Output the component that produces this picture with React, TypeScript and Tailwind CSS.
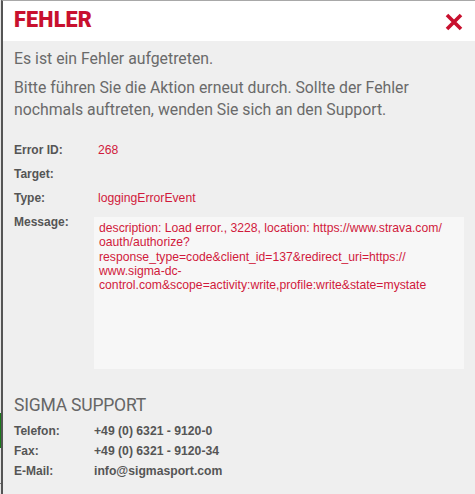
import React from 'react';

const RED = 'text-[#c8102e]';

const details: { label: string; value: string }[] = [
  { label: 'Error ID:', value: '268' },
  { label: 'Target:', value: '' },
  { label: 'Type:', value: 'loggingErrorEvent' },
];

// lines as the browser wrapped them in the box
const messageLines = [
  'description: Load error., 3228, location: https://www.strava.com/',
  'oauth/authorize?',
  'response_type=code&client_id=137&redirect_uri=https://',
  'www.sigma-dc-',
  'control.com&scope=activity:write,profile:write&state=mystate',
];

const support = [
  { label: 'Telefon:', value: '+49 (0) 6321 - 9120-0' },
  { label: 'Fax:', value: '+49 (0) 6321 - 9120-34' },
  { label: 'E-Mail:', value: 'info@sigmasport.com' },
];

const CloseIcon = () => (
  <svg width="18" height="18" viewBox="0 0 18 18" className="block">
    <path d="M2 2 L16 16 M16 2 L2 16" stroke="#c8102e" strokeWidth="3.6" fill="none" />
  </svg>
);

const App: React.FC = () => {
  return (
    <div className="flex w-[475px] h-[494px] overflow-hidden bg-[#f0f0f0] font-['Liberation_Sans',Arial,sans-serif]">
      {/* page behind the dialog peeks through on the left */}
      <div className="flex flex-col w-px shrink-0">
        <div className="h-[413px] bg-[#e6e6e6]" />
        <div className="h-[35px] bg-[#1a7a1a]" />
        <div className="h-[35px] bg-[#e6e6e6]" />
        <div className="h-px bg-[#777]" />
        <div className="flex-1 bg-[#e6e6e6]" />
      </div>

      <div className="flex-1 flex flex-col border-l-2 border-t border-l-[#555] border-t-[#a8a8a8] bg-[#efefef]">
        {/* header */}
        <div className="h-10 shrink-0 bg-white flex items-center justify-between pl-[11px] pr-[12px]">
          <h1 className={`${RED} font-['Roboto',sans-serif] font-black text-[21.6px] leading-none tracking-[0.2px] mt-[-2px]`}>
            FEHLER
          </h1>
          <button className="mt-[1px]">
            <CloseIcon />
          </button>
        </div>

        {/* body */}
        <div className="pl-[11px] pr-[10px] pt-[7px]">
          <p className="font-['Roboto',sans-serif] text-[15.8px] leading-[22px] text-[#6a6a6a]">
            Es ist ein Fehler aufgetreten.
          </p>
          <p className="mt-[7px] font-['Roboto',sans-serif] text-[15.8px] leading-[22px] text-[#6a6a6a]">
            Bitte führen Sie die Aktion erneut durch. Sollte der Fehler nochmals auftreten, wenden Sie sich an den Support.
          </p>

          <div className="mt-[17px] text-[12px]">
            {details.map(d => (
              <div key={d.label} className="flex h-6 leading-6">
                <span className="w-20 font-bold text-[#555]">{d.label}</span>
                <span className="pl-1 text-[12.2px] text-[#d11a3c]">{d.value}</span>
              </div>
            ))}
            <div className="flex">
              <span className="w-20 leading-6 font-bold text-[#555]">Message:</span>
              <div className="mt-[7px] w-[370px] h-[152px] bg-[#f7f7f7] pl-[5px] pt-1 text-[12.2px] text-[#d11a3c] leading-[14.3px]">
                {messageLines.map((line, i) => (
                  <div key={i} className="whitespace-nowrap">
                    {line}
                  </div>
                ))}
              </div>
            </div>
          </div>

          <h2 className="mt-6 font-['Roboto',sans-serif] text-[17.5px] leading-6 text-[#666] tracking-[-0.2px]">
            SIGMA SUPPORT
          </h2>
          <div className="mt-1 text-[12px]">
            {support.map(s => (
              <div key={s.label} className="flex leading-5">
                <span className="w-20 font-bold text-[#555]">{s.label}</span>
                <span className="font-bold text-[#555] text-[12.2px]">{s.value}</span>
              </div>
            ))}
          </div>
        </div>
      </div>
    </div>
  );
};

export default App;
